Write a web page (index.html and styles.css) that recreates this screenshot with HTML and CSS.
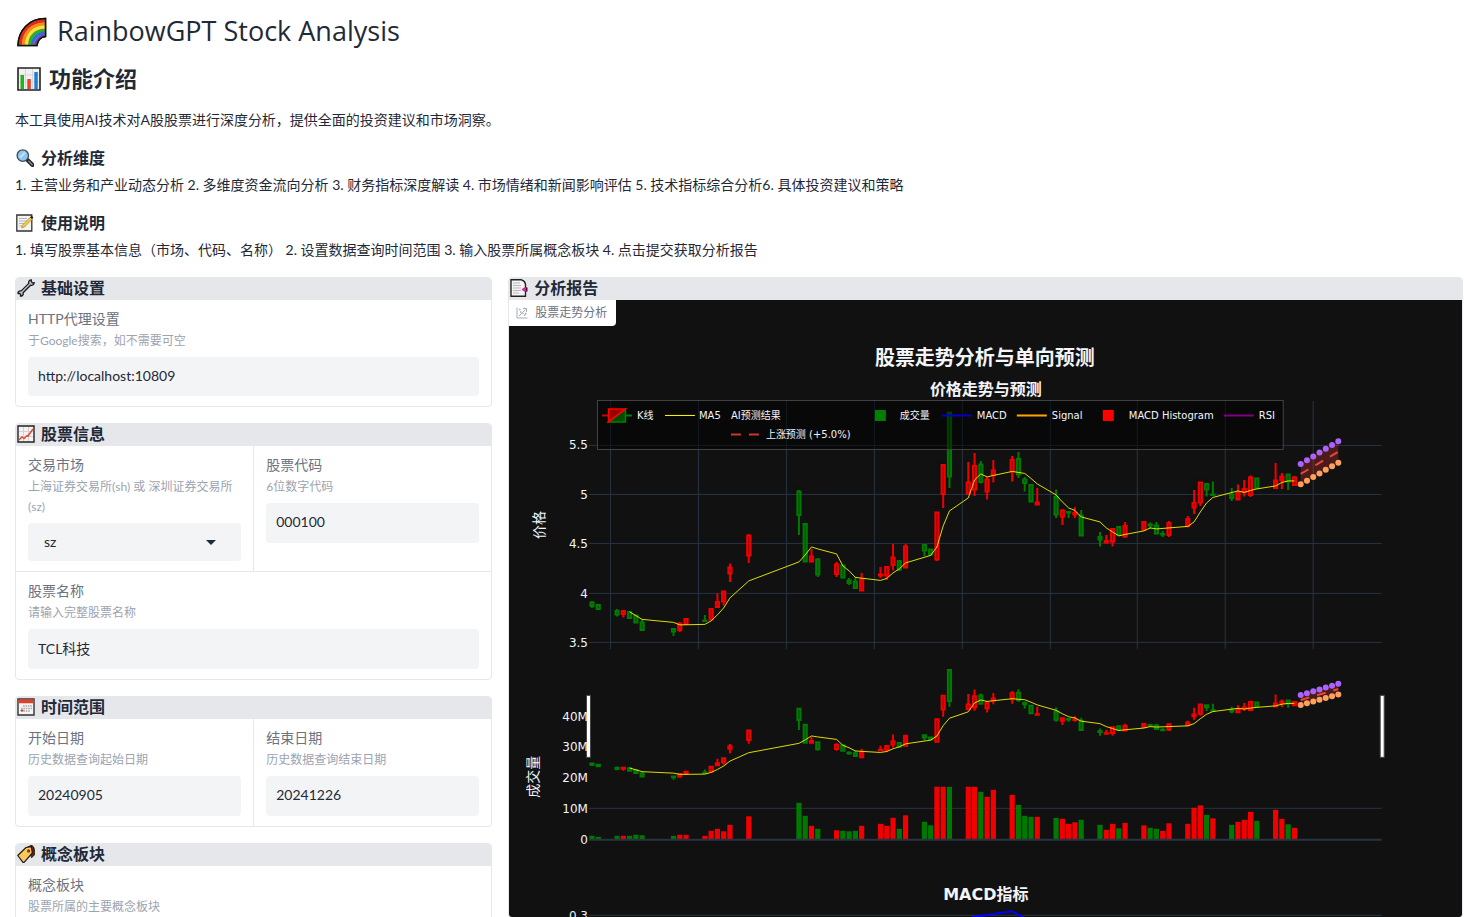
FILE: index.html
```html
<!DOCTYPE html>
<html lang="zh-CN">
<head>
<meta charset="utf-8">
<title>RainbowGPT Stock Analysis</title>
<link rel="stylesheet" href="styles.css">
</head>
<body>
<main class="page">
  <h1 class="title">
    <svg class="icon icon-xl" viewBox="0 0 30 30" aria-hidden="true">
      <path d="M1 28.500C1.500 13 12 1.500 28.500 1.500V19.500C24 20 20.500 23.500 20 28.500Z" fill="#f7d51d" stroke="#111" stroke-width="1.500"/>
      <g fill="none" stroke-width="3.200">
        <path d="M3.400 27.700C4 14 13 4 27.700 3.800" stroke="#e02a1f"/>
        <path d="M6.500 27.700C7 15.500 15 7.200 27.700 7" stroke="#f58a1f"/>
        <path d="M9.600 27.700C10 17.500 17 10.400 27.700 10.200" stroke="#fbe03a"/>
        <path d="M12.700 27.700C13 19 19 13.600 27.700 13.400" stroke="#2faa35"/>
        <path d="M15.400 27.700C16 21 21 16.200 27.700 16" stroke="#2a6fe0"/>
        <path d="M18.200 27.700C19 22.500 23 19 27.700 18.400" stroke="#6b3bb5" stroke-width="2.400"/>
      </g>
      <path d="M1 28.500C1.500 13 12 1.500 28.500 1.500V19.500C24 20 20.500 23.500 20 28.500Z" fill="none" stroke="#111" stroke-width="1.500"/>
    </svg>
    <span>RainbowGPT Stock Analysis</span>
  </h1>

  <h2 class="subtitle">
    <svg class="icon icon-lg" viewBox="0 0 24 24" aria-hidden="true">
      <path d="M1 1h22v22H1z" fill="#f1f1f1" stroke="#222" stroke-width="1.600"/>
      <path d="M2 8h20M2 15h20M8.500 2v20M15.500 2v20" stroke="#d5d5d5"/>
      <path d="M3.500 8h3.500v14H3.500z" fill="#22b31f"/><path d="M10.300 12h3.500v10h-3.500z" fill="#e8402a"/><path d="M17.300 5h3.500v17h-3.500z" fill="#1f7fd6"/>
    </svg>
    <span>功能介绍</span>
  </h2>
  <p class="lead">本工具使用AI技术对A股股票进行深度分析，提供全面的投资建议和市场洞察。</p>

  <h3 class="heading">
    <svg class="icon" viewBox="0 0 18 18" aria-hidden="true">
      <path d="M11.500 11l5 5" stroke="#222" stroke-width="4" stroke-linecap="round"/>
      <path d="M12.800 12.200l3.400 3.600" stroke="#888" stroke-width="1.400" stroke-linecap="round"/>
      <circle cx="6.800" cy="6.600" r="5.700" fill="#8fc6ee" stroke="#3b4a57" stroke-width="1.300"/>
      <path d="M4 8.800l4.800-5" stroke="#c5e2f7" stroke-width="2"/>
    </svg>
    <span>分析维度</span>
  </h3>
  <p class="steps">1. 主营业务和产业动态分析 2. 多维度资金流向分析 3. 财务指标深度解读 4. 市场情绪和新闻影响评估 5. 技术指标综合分析6. 具体投资建议和策略</p>

  <h3 class="heading">
    <svg class="icon" viewBox="0 0 18 18" aria-hidden="true">
      <path d="M.8 1h15v16h-15z" fill="#f3f3f3" stroke="#333" stroke-width="1.300"/>
      <path d="M3 4.500h8M3 7h8M3 9.500h6M3 12h4" stroke="#b5b5b5"/>
      <path d="M5.500 14l1-3 8-8 2 2-8 8z" fill="#f2c84b" stroke="#a27a2a" stroke-width=".6"/>
      <path d="M14 3.200l1.600-1.400 1.800 1.800-1.500 1.500z" fill="#222"/>
    </svg>
    <span>使用说明</span>
  </h3>
  <p class="steps">1. 填写股票基本信息（市场、代码、名称） 2. 设置数据查询时间范围 3. 输入股票所属概念板块 4. 点击提交获取分析报告</p>

  <div class="columns">
    <form class="settings">
      <section class="card">
        <h3 class="card-head">
          <svg class="icon" viewBox="0 0 18 18" aria-hidden="true">
            <path d="M1 14.500a2.500 2.500 0 0 1 3.200-2.600L11.800 4.400a2.700 2.700 0 0 1 2.600-3.600L14.200 2.600l1.200 1.200L17.200 3.600A2.700 2.700 0 0 1 13.600 6.200L6.100 13.800a2.600 2.600 0 0 1-2.700 3.400L3.700 15.500l-1.200-1.200z" fill="#bfc2c6" stroke="#1c1c1c" stroke-width="1.300" stroke-linejoin="round"/>
          </svg>
          <span>基础设置</span>
        </h3>
        <div class="row">
          <div class="field">
            <label for="proxy">HTTP代理设置</label>
            <p class="info">于Google搜索，如不需要可空</p>
            <input class="control compact" id="proxy" type="text" value="http://localhost:10809">
          </div>
        </div>
      </section>

      <section class="card">
        <h3 class="card-head">
          <svg class="icon" viewBox="0 0 18 18" aria-hidden="true">
            <path d="M1 1h16v16H1z" fill="#f3f3f3" stroke="#222" stroke-width="1.400"/>
            <path d="M2 6.500h14M2 11.500h14M6.500 2v14M11.500 2v14" stroke="#d0d0d0"/>
            <path d="M2 15l3-3 2 1.500 3-3 1 .5 5-7" fill="none" stroke="#e0452c" stroke-width="1.400"/>
          </svg>
          <span>股票信息</span>
        </h3>
        <div class="row">
          <div class="field">
            <label for="market">交易市场</label>
            <p class="info">上海证券交易所(sh) 或 深圳证券交易所(sz)</p>
            <div class="select-wrap">
              <select class="control select" id="market"><option>sz</option><option>sh</option></select>
              <svg class="caret" viewBox="0 0 10 5" aria-hidden="true"><path d="M0 0h10L5 5z" fill="#1f2937"/></svg>
            </div>
          </div>
          <div class="field">
            <label for="code">股票代码</label>
            <p class="info">6位数字代码</p>
            <input class="control" id="code" type="text" value="000100">
          </div>
        </div>
        <div class="row">
          <div class="field">
            <label for="name">股票名称</label>
            <p class="info">请输入完整股票名称</p>
            <input class="control" id="name" type="text" value="TCL科技">
          </div>
        </div>
      </section>

      <section class="card">
        <h3 class="card-head">
          <svg class="icon" viewBox="0 0 18 18" aria-hidden="true">
            <path d="M1 1h16v16H1z" fill="#f5f5f5" stroke="#333" stroke-width="1.400"/>
            <path d="M1.500 1.500h15v3.700h-15z" fill="#e0402a"/>
            <path d="M6 8h9M4 10.500h11M4 13h9" stroke="#aaa" stroke-width="1.600" stroke-dasharray="1.600 .8"/>
            <path d="M3.500 12.500h3M5 11v3" stroke="#e0402a"/>
          </svg>
          <span>时间范围</span>
        </h3>
        <div class="row">
          <div class="field">
            <label for="start">开始日期</label>
            <p class="info">历史数据查询起始日期</p>
            <input class="control" id="start" type="text" value="20240905">
          </div>
          <div class="field">
            <label for="end">结束日期</label>
            <p class="info">历史数据查询结束日期</p>
            <input class="control" id="end" type="text" value="20241226">
          </div>
        </div>
      </section>

      <section class="card">
        <h3 class="card-head">
          <svg class="icon" viewBox="0 0 18 18" aria-hidden="true">
            <path d="M10 2.500l4-2q3 0 3.300 4.500v5l-3 3" fill="#6b2412" stroke="#1c1208"/>
            <path d="M.8 10.500L9 2.500l5.300-.8 1 6.300-8 9.200q-.8.500-1.500 0z" fill="#fbc860" stroke="#221a10" stroke-width="1.200" stroke-linejoin="round"/>
            <circle cx="11.600" cy="6" r="1.700" fill="#8a3a16"/>
          </svg>
          <span>概念板块</span>
        </h3>
        <div class="row">
          <div class="field">
            <label for="sector">概念板块</label>
            <p class="info">股票所属的主要概念板块</p>
            <input class="control" id="sector" type="text">
          </div>
        </div>
      </section>
    </form>

    <section class="card report">
      <h3 class="card-head">
        <svg class="icon" viewBox="0 0 18 18" aria-hidden="true">
          <path d="M1 .8h10.500q3.500 1 4 4.500v11.900H1z" fill="#f4f4f4" stroke="#222" stroke-width="1.400"/>
          <path d="M3 4h7M3 6.500h8M3 9h8M3 11.500h8M3 14h6" stroke="#b9b9b9"/>
          <path d="M11.500 10.500l2.500-2H17v4h-3z" fill="#d6249a"/><path d="M16 8.500h1.500v4H16z" fill="#43102f"/>
        </svg>
        <span>分析报告</span>
      </h3>
      <figure class="plot">
        <figcaption class="plot-label">
          <svg class="plot-icon" viewBox="0 0 12 12" fill="none" stroke="#a5abb3" aria-hidden="true">
            <path d="M1 .500v10.500h10.500M3 9l6.500-6.500M7 1.500h3.500v3.500"/><path d="M3 2.500h1.500M4 5h1.500M8 8h1.500M6.500 6.500h1M9 6.500h1.500" stroke-width="1.400"/>
          </svg>
          <span>股票走势分析</span>
        </figcaption>
        <svg class="chart" viewBox="509 300 953 617" role="img" aria-label="股票走势分析与单向预测">
          <defs>
            <clipPath id="volume-clip"><rect x="589" y="787" width="794" height="53"/></clipPath>
          </defs>
          <g id="grid" class="grid"></g>
          <g id="price"></g>
          <g id="volume" clip-path="url(#volume-clip)"></g>
          <path class="zero" d="M589 840H1382"/>
          <g id="slider"></g>
          <g class="handle"><rect x="586.500" y="695.500" width="4" height="62"/><rect x="1380.500" y="695.500" width="4" height="62"/></g>
          <path d="M972 917.500L1012 911.500L1024 917.500" fill="none" stroke="#00f" stroke-width="2"/>

          <g class="tick">
            <text x="588" y="449">5.5</text><text x="588" y="499">5</text><text x="588" y="548">4.5</text><text x="588" y="598">4</text><text x="588" y="647">3.5</text>
            <text x="588" y="721">40M</text><text x="588" y="751">30M</text><text x="588" y="782">20M</text><text x="588" y="813">10M</text><text x="588" y="844">0</text><text x="588" y="920">0.3</text>
          </g>
          <text class="axis" transform="translate(544 525) rotate(-90)">价格</text>
          <text class="axis" transform="translate(538 777) rotate(-90)">成交量</text>

          <rect class="legend-box" x="597.500" y="400.500" width="686" height="49"/>
          <g class="legend">
            <path d="M602 415.500h6" stroke="#d00000" stroke-width="2"/>
            <path d="M626 415.500h6" stroke="#008000" stroke-width="2"/>
            <path d="M625.500 409v13h-17z" fill="#004d00" stroke="#008000" stroke-width="1.500"/>
            <path d="M608.500 422v-13h17z" fill="#900" stroke="#f00" stroke-width="1.500"/>
            <text x="637" y="419">K线</text>
            <path d="M665 415.500h30" stroke="#ff0"/>
            <text x="699" y="419">MA5</text>
            <text x="731" y="419">AI预测结果</text>
            <path d="M731 434.500h30" stroke="#ff4136" stroke-width="2" stroke-dasharray="10 8" opacity=".8"/>
            <text x="766" y="438">上涨预测 (+5.0%)</text>
            <rect x="875" y="410" width="11" height="11" fill="#008000"/>
            <text x="900" y="419">成交量</text>
            <path d="M942 415.500h30" stroke="#0000c8" stroke-width="2"/>
            <text x="977" y="419">MACD</text>
            <path d="M1017 415.500h30" stroke="#ffa500" stroke-width="2"/>
            <text x="1052" y="419">Signal</text>
            <rect x="1103" y="410" width="11" height="11" fill="#f00"/>
            <text x="1129" y="419">MACD Histogram</text>
            <path d="M1224 415.500h30" stroke="#800080" stroke-width="2"/>
            <text x="1259" y="419">RSI</text>
          </g>
          <text class="chart-title" x="985" y="365">股票走势分析与单向预测</text>
          <text class="chart-subtitle" x="986" y="395">价格走势与预测</text>
          <text class="chart-subtitle" x="986" y="900">MACD指标</text>
        </svg>
      </figure>
    </section>
  </div>
</main>
<script src="chart.js"></script>
</body>
</html>
```
FILE: styles.css
```css
* { box-sizing: border-box; }
html, body { margin: 0; }
body {
  height: 100vh;
  overflow: hidden;
  background: #fff;
  color: #1f2937;
  font: 400 14px/22px Lato, "Noto Sans CJK SC", sans-serif;
}
.page { padding: 12px 1px 0 15px; }
h1, h2, h3, p, figure { margin: 0; }
.icon { width: 18px; height: 18px; flex: none; display: block; }
.icon-xl { width: 30px; height: 30px; }
.icon-lg { width: 24px; height: 24px; }

.title {
  display: flex; align-items: center; gap: 10px;
  height: 40px; padding-left: 2px;
  font-family: "Open Sans", sans-serif;
  font-size: 27px; line-height: 38px; font-weight: 400;
}
.title span { padding-bottom: 2px; }
.subtitle {
  display: flex; align-items: center; gap: 8px;
  height: 30px; margin-top: 12px; padding-left: 2px;
  font-size: 22px; font-weight: 700;
}
.lead { margin-top: 15px; }
.heading {
  display: flex; align-items: center; gap: 7px;
  height: 24px; margin-top: 15px; padding-left: 1px;
  font-size: 16px; font-weight: 700;
}
.steps { margin-top: 4px; }

.columns {
  display: grid;
  grid-template-columns: minmax(0, 1fr) minmax(0, 2fr);
  gap: 16px;
  margin-top: 16px;
}
.settings { display: flex; flex-direction: column; gap: 16px; }
.card {
  border: 1px solid #e5e7eb;
  border-radius: 4px;
  overflow: hidden;
}
.card-head {
  display: flex; align-items: center; gap: 6px;
  height: 22px; padding: 0 0 2px 1px;
  background: #e5e7eb;
  font-size: 16px; line-height: 20px; font-weight: 700;
}
.row { display: flex; }
.row + .row { border-top: 1px solid #e5e7eb; }
.field { flex: 1 1 0; min-width: 0; padding: 8px 12px 10px; }
.field + .field { border-left: 1px solid #e5e7eb; }
.field label { display: block; color: #6b7280; }
.info { margin: 1px 0 6px; font-size: 12px; line-height: 20px; color: #9ca3af; }
.control {
  display: block; width: 100%; height: 40px;
  padding: 0 10px 3px;
  border: 0; border-radius: 4px;
  background: #f3f4f6; color: #1f2937;
  font: inherit;
}
.control.compact { height: 39px; }
.control.select { height: 38px; padding: 0 16px; appearance: none; }
.select-wrap { position: relative; }
.caret { position: absolute; right: 25px; top: 17px; width: 10px; height: 5px; }

.report { align-self: start; }
.plot { position: relative; background: #111; }
.plot-label {
  position: absolute; left: 0; top: 0;
  display: flex; align-items: center; gap: 7px;
  height: 26px; padding: 0 9px 1px 7px;
  border-bottom-right-radius: 4px;
  background: #fff; color: #6b7280;
  font-size: 12px;
}
.plot-icon { width: 12px; height: 12px; }
.chart {
  display: block; width: 100%; height: auto;
  font-family: "DejaVu Sans", "Noto Sans CJK SC", sans-serif;
}
.chart text { fill: #f2f5fa; }
.chart .grid { fill: none; stroke: #283442; }
.zero { stroke: #283442; stroke-width: 2; }
.tick { font-size: 12px; text-anchor: end; }
.axis { font-size: 14px; text-anchor: middle; }
.legend { font-size: 10px; }
.legend-box { fill: rgba(0, 0, 0, .5); stroke: #444; }
.chart .chart-title { font-size: 20px; font-weight: 700; text-anchor: middle; }
.chart .chart-subtitle { font-size: 16px; font-weight: 700; text-anchor: middle; }
.handle rect { fill: #fff; stroke: #444; }
.up { stroke: #f00; fill: rgba(255, 0, 0, .6); }
.down { stroke: #008000; fill: rgba(0, 128, 0, .6); }
.candle { stroke-width: 2; opacity: .95; }
.bar-up { fill: #f00; opacity: .95; }
.bar-down { fill: #008000; opacity: .95; }
.average { fill: none; stroke: #ff0; opacity: .85; }
.band { fill: rgba(255, 65, 54, .25); }
.forecast { fill: none; stroke: #ff4f44; stroke-width: 2; stroke-dasharray: 9 8; opacity: .85; }
.upper { fill: #ab63fa; }
.lower { fill: #ffa15a; }
```
FILE: chart.js
```
// day, high, body top, body bottom, low, candle rising, volume top, volume rising (when it differs)
const candles = [
[0,601,602,606.5,608,0,836],[1,604,604.5,609.5,609.5,0,837],
[4,609,610.5,615,616.5,0,836],[5,610,610.5,614.5,617.5,1,836],[6,611,611.5,618.5,619,0,836],[7,615,615,623,623.5,0,835],[8,619,622,630.5,630.5,0,835.5],
[13,628,628.5,632,636,0,836],[14,622,623,630.5,632,1,835],[15,618,618.5,624.5,624.5,1,835],
[18,615,620,621.5,621.5,0,836,1],[19,608.5,608.5,620,620,1,831],[20,593.5,601.5,607.5,607.5,1,829],[21,590.5,591,602,605.5,1,831.5],[22,563.5,567,574,582,1,825],
[25,534,535,556,563,1,816.5],
[33,490,491,515.5,535,0,803],[34,523,523.5,562,562.5,0,816],[35,549,556,562,562.5,1,826],[36,558,559,575,577,0,829],
[39,562,564,574.5,577,1,830.5],[40,565,565,578,578,0,831],[41,578,580,583.5,585,0,831.5],[42,577,581,588.5,589,0,831],[43,573,579,591,591,1,826],
[46,567,574,576,578,1,824],[47,566,566.5,576,580,1,826],[48,544,557,565.5,570.5,1,818],[49,560,560.5,570,571,0,829],[50,544,546,568,568.5,1,815.5],
[53,544,544.5,551,556,0,822],[54,549,549,555,556,0,825.5],[55,511.5,512,560,561,1,780],[56,464,464.5,494.5,508,1,780],[57,412,412,477,488,0,780],
[60,462,482,494,495,1,780],[61,453,465.5,490,496,1,780],[62,461,464,482.5,483.5,0,792],[63,477,479,492,499.5,1,797],[64,460,470,475.5,482.5,1,790],
[67,456,459.5,472,481.5,1,795],[68,452,458.5,475,478,0,805],[69,477,479,483.5,491.5,0,816],[70,484,484.5,502,502.5,0,817],[71,488,502,505,505,1,817],
[74,489.5,496.5,515,518,0,818],[75,509,510,517,525,1,819],[76,511,511.5,513,518,0,824,1],[77,507,512.5,515,518,1,822.5],[78,510,515,536,536.5,0,820],
[81,532,536.5,540,546.5,0,825],[82,535,540.5,543,543,1,830],[83,528,528.5,542,546.5,1,824],[84,526,526.5,535,536,0,828.5],[85,522,525.5,537,538,1,823],
[88,521,521.5,530,531,1,825.5],[89,522.5,524,526,529,0,828],[90,522,525,534,534.5,0,829],[91,531,533.5,535,537,0,831,1],[92,521,522.5,535.5,537,1,823.5],
[95,516,518.5,526.5,527.5,1,824],[96,490,502.5,508,514,1,808],[97,481.5,482,503,506,1,805.5],[98,483,483.5,490,496.5,0,815],[99,481.5,494,495.5,496,0,818.5,1],
[102,488,494,498.5,501,0,825],[103,484.5,492,500,500.5,1,822],[104,480,488.5,492.5,496.5,1,820],[105,475.5,477,495.5,497,1,812],[106,478,478,488.5,489,0,821],
[109,463,480,488.5,489,1,810],[110,473,476,481,489,1,819],[111,474,474,482,490,0,824.5],[112,476,477,485.5,486,1,828]
];
const average = [[6,612],[8,619.5],[13,622.5],[14,625],[18,624.5],[19,621],[20,615],[21,608],[22,598],[25,581],[33,562],[34,555],[35,547],[36,549],[39,554],[40,566],[41,571],[42,577.5],[46,580.5],[47,578.5],[48,573],[49,569],[50,563],[54,555.5],[55,547],[56,526],[57,511],[60,498],[61,480],[62,474],[63,477],[64,475.5],[67,471.5],[69,473.5],[70,478.5],[71,484],[74,495],[75,502],[76,508],[77,510.5],[78,517],[81,522],[82,528],[83,532],[84,536],[85,534.5],[88,531],[89,528],[90,529],[95,526.5],[96,522],[97,512],[98,503],[99,497.5],[103,491],[104,492.5],[105,490.5],[106,489],[109,486],[110,482.5],[111,481],[112,481]];

const xOf = day => 592 + 6.274 * day;
const full = y => y;
const mini = y => 708 + 0.493 * (y - 490);
const line = points => 'M' + points.map(p => p.join(' ')).join('L');

function drawSeries(yOf) {
  let out = '';
  for (const [day, high, top, bottom, low, up] of candles) {
    const x = xOf(day);
    const t = yOf(top) + 0.5;
    const b = Math.max(t + 0.5, yOf(bottom) - 0.5);
    out += `<path class="candle ${up ? 'up' : 'down'}" d="M${x} ${yOf(high)}V${t}M${x} ${b}V${yOf(low)}M${x - 1.6} ${t}H${x + 1.6}V${b}H${x - 1.6}Z"/>`;
  }
  out += `<path class="average" d="${line(average.map(([d, y]) => [xOf(d), yOf(y)]))}"/>`;
  const upper = [], lower = [], middle = [];
  for (let i = 0; i < 7; i++) {
    const x = xOf(113 + i);
    upper.push([x, yOf(464 - 3.78 * i)]);
    middle.push([x, yOf(474 - 3.7 * i)]);
    lower.push([x, yOf(484.3 - 3.6 * i)]);
  }
  out += `<path class="band" d="${line(upper.concat(lower.slice().reverse()))}Z"/>`;
  out += `<path class="forecast" d="${line(middle)}"/>`;
  for (const [x, y] of upper) out += `<circle class="upper" cx="${x}" cy="${y}" r="3"/>`;
  for (const [x, y] of lower) out += `<circle class="lower" cx="${x}" cy="${y}" r="3"/>`;
  return out;
}

let grid = '';
for (const x of [610.5, 698.5, 786.5, 874.5, 962.5, 1050.5, 1137.5, 1225.5, 1313.5]) grid += `M${x} 401V649`;
for (const y of [445.5, 494.5, 543.5, 593.5, 642.5, 808.5, 915.5]) grid += `M589 ${y}H1382`;
document.getElementById('grid').innerHTML = `<path d="${grid}"/>`;
document.getElementById('price').innerHTML = drawSeries(full);
document.getElementById('slider').innerHTML = drawSeries(mini);
document.getElementById('volume').innerHTML = candles.map(([day, , , , , up, top, volumeUp = up]) =>
  `<rect class="${volumeUp ? 'bar-up' : 'bar-down'}" x="${xOf(day) - 2.6}" y="${top}" width="5.2" height="${839.5 - top}"/>`).join('');
```
